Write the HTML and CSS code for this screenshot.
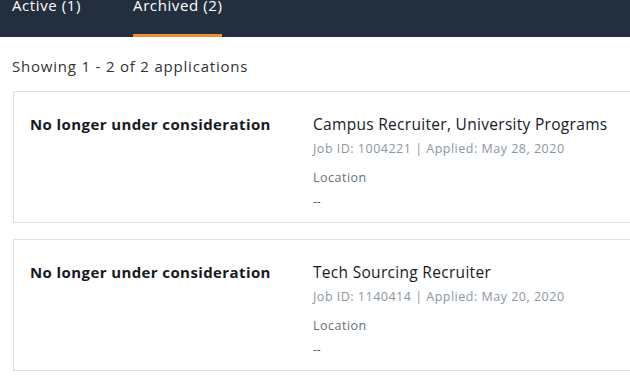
FILE: index.html
```html
<!DOCTYPE html>
<html lang="en">
<head>
    <meta charset="UTF-8">
    <meta name="viewport" content="width=device-width, initial-scale=1.0">
    <title>My Applications</title>
    <link rel="stylesheet" href="styles.css">
</head>
<body>
    <nav class="tabs">
        <a class="tab">Active (1)</a>
        <a class="tab active">Archived (2)</a>
    </nav>

    <div class="content">
        <p class="count">Showing 1 - 2 of 2 applications</p>

        <div class="list">
            <div class="app-card">
                <div class="status">No longer under consideration</div>
                <div class="job">
                    <h3 class="title">Campus Recruiter, University Programs</h3>
                    <p class="meta">Job ID: 1004221 | Applied: May 28, 2020</p>
                    <p class="label">Location</p>
                    <p class="value">--</p>
                </div>
            </div>

            <div class="app-card">
                <div class="status">No longer under consideration</div>
                <div class="job">
                    <h3 class="title">Tech Sourcing Recruiter</h3>
                    <p class="meta">Job ID: 1140414 | Applied: May 20, 2020</p>
                    <p class="label">Location</p>
                    <p class="value">--</p>
                </div>
            </div>
        </div>
    </div>
</body>
</html>
```

FILE: styles.css
```css
* {
    margin: 0;
    padding: 0;
    box-sizing: border-box;
    font-family: 'Open Sans', sans-serif;
}

body {
    background: #fff;
    color: #16191f;
    overflow: hidden;
}

.tabs {
    background: #232f3e;
    height: 37px;
    display: flex;
    gap: 52px;
    padding: 0 12px;
    overflow: hidden;
}

.tab {
    color: #fff;
    font-size: 15px;
    letter-spacing: 0.6px;
    line-height: 18px;
    margin-top: -4px;
    height: 41px;
    border-bottom: 3px solid transparent;
}

.tab.active {
    border-bottom-color: #ec912d;
}

.content {
    padding: 0 0 0 13px;
}

.count {
    font-size: 15px;
    letter-spacing: 0.8px;
    color: #333;
    line-height: 20px;
    margin: 19px 0 0 -1px;
}

.list {
    margin: 15px -40px 0 0;
    display: flex;
    flex-direction: column;
    gap: 16px;
}

.app-card {
    border: 1px solid #dde1e4;
    display: flex;
    padding: 23px 16px 12px;
}

.status {
    width: 283px;
    font-size: 15px;
    letter-spacing: 0.4px;
    font-weight: 700;
    line-height: 18px;
}

.title {
    font-size: 15.5px;
    letter-spacing: 0.3px;
    font-weight: 400;
    line-height: 18px;
}

.meta {
    font-size: 12.5px;
    letter-spacing: 0.5px;
    color: #8a96a3;
    line-height: 16px;
    margin-top: 8px;
}

.label {
    font-size: 12.5px;
    letter-spacing: 0.5px;
    color: #687078;
    line-height: 16px;
    margin-top: 13px;
}

.value {
    font-size: 12px;
    color: #555;
    line-height: 16px;
    margin-top: 8px;
}
```
